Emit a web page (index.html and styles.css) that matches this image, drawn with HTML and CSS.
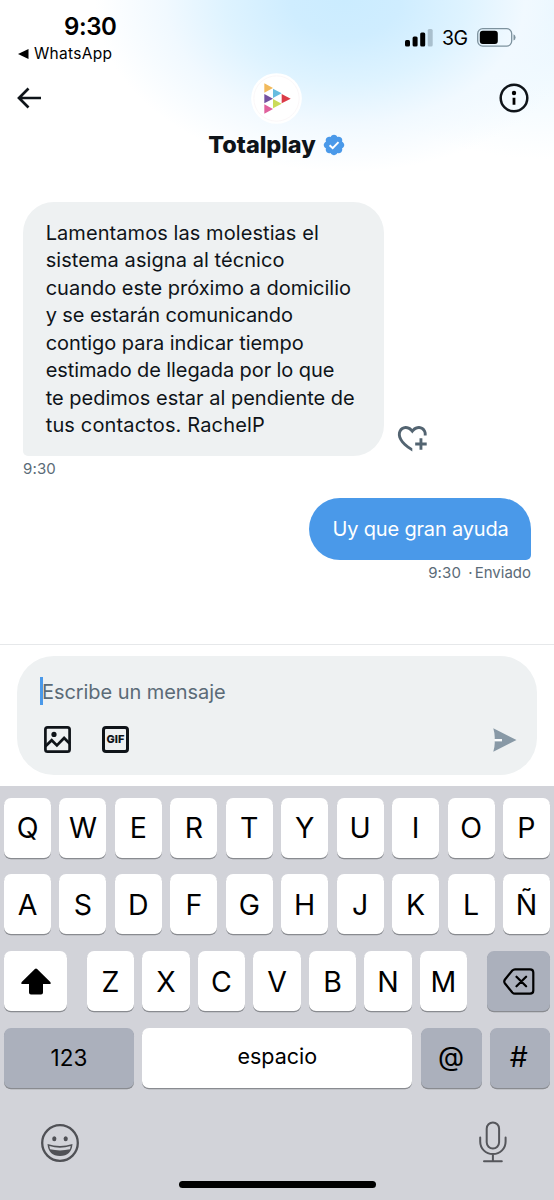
FILE: index.html
```
<!DOCTYPE html>
<html lang="es">
<head>
<meta charset="utf-8">
<title>Totalplay</title>
<link rel="stylesheet" href="styles.css">
</head>
<body>
<div class="screen">
  <header class="header">
    <div class="status">
      <div class="status-left">
        <div class="clock">9:30</div>
        <div class="return-app"><svg class="return-icon" viewBox="0 0 11 10"><path d="M0 5 10.5 0v10z"/></svg><span>WhatsApp</span></div>
      </div>
      <div class="status-right">
        <svg class="signal" viewBox="0 0 28 18"><rect x="0" y="11" width="5" height="6.5" rx="1.5"/><rect x="7.6" y="7.5" width="5" height="10" rx="1.5"/><rect x="15.2" y="3.5" width="5" height="14" rx="1.5"/><rect class="signal-off" x="22.7" y="0" width="5" height="17.5" rx="1.5"/></svg>
        <span class="network">3G</span>
        <svg class="battery" viewBox="0 0 39 19"><rect class="battery-shell" x=".7" y=".7" width="34" height="17.4" rx="5"/><rect x="2.8" y="2.8" width="18" height="13.2" rx="3"/><path class="battery-tip" d="M36.5 6.3Q38.600 7.200 38.600 9.400T36.500 12.500z"/></svg>
      </div>
    </div>
    <div class="nav">
      <svg class="back" viewBox="0 0 26 22"><path d="M24 11H2M11.500 1.500 2 11l9.500 9.500"/></svg>
      <svg class="avatar" viewBox="49 23 153 153">
        <circle cx="125.500" cy="99.500" r="76" fill="#fff"/><circle cx="125.500" cy="99.500" r="68" fill="none" stroke="#f7f3f4" stroke-width="2"/>
        <path fill="#f2ba5c" d="M89 54l26 14-26 14z"/><path fill="#7551a0" d="M89 86l26 14-26 14z"/><path fill="#e0609c" d="M89 117l26 14-26 14z"/>
        <path fill="#67bde0" d="M115 70l26 14-26 14z"/><path fill="#cbdb58" d="M115 101l26 14-26 14z"/><path fill="#da3b47" d="M141 86l27 14-27 14z"/>
      </svg>
      <svg class="info" viewBox="0 0 30 30"><circle class="info-ring" cx="15" cy="15" r="13.300"/><circle cx="15" cy="10" r="2.200"/><path d="M13.600 14.800h2.800v7h-2.800z"/></svg>
    </div>
    <div class="title"><h1 class="name">Totalplay</h1><svg class="verified" viewBox="0 0 24 24"><path fill="#4a99e9" d="M22.250 12c0-1.430-.88-2.670-2.190-3.340.46-1.390.2-2.900-.81-3.910s-2.520-1.270-3.910-.81c-.66-1.310-1.910-2.190-3.340-2.190s-2.670.88-3.330 2.190c-1.400-.46-2.910-.2-3.920.81s-1.260 2.520-.8 3.910c-1.310.67-2.200 1.910-2.200 3.340s.89 2.670 2.200 3.340c-.46 1.390-.21 2.900.8 3.910s2.520 1.260 3.910.81c.67 1.310 1.910 2.190 3.340 2.190s2.680-.88 3.340-2.190c1.390.45 2.900.2 3.910-.81s1.270-2.520.81-3.910c1.310-.67 2.190-1.910 2.190-3.340z"/><path fill="none" stroke="#fff" stroke-width="2" d="M7.600 12.200l3.100 3 5.800-6.100"/></svg></div>
  </header>

  <main class="thread">
    <div class="incoming">
      <p class="bubble bubble-in"><span class="loose">Lamentamos las molestias el</span><br><span class="loose">sistema asigna al técnico</span><br>cuando este próximo a domicilio<br><span class="tight">y se estarán comunicando</span><br><span class="snug">contigo para indicar tiempo</span><br><span class="tight">estimado de llegada por lo que</span><br>te pedimos estar al pendiente de<br><span class="wide">tus contactos. RachelP</span></p>
      <svg class="react" viewBox="0 0 24 24"><path d="M17 12v3h-2.998v2h3v3h2v-3h3v-2h-3.001v-3H17zm-5 6.839c-3.871-2.340-6.053-4.639-7.127-6.609-1.112-2.040-1.031-3.700-.479-4.820.561-1.130 1.667-1.840 2.910-1.910 1.222-.06 2.680.51 3.892 2.160l.806 1.090.805-1.090c1.211-1.650 2.668-2.220 3.890-2.160 1.242.07 2.347.78 2.908 1.910.334.677.49 1.554.321 2.590h2.011c.153-1.283-.039-2.469-.539-3.480-.887-1.790-2.647-2.910-4.601-3.010-1.650-.09-3.367.56-4.796 2.010-1.430-1.450-3.147-2.100-4.798-2.010-1.954.1-3.714 1.220-4.601 3.010-.896 1.810-.846 4.170.514 6.670 1.353 2.480 4.003 5.120 8.382 7.670l.502.299v-2.320z"/></svg>
    </div>
    <div class="meta">9:30</div>
    <p class="bubble bubble-out">Uy que gran ayuda</p>
    <div class="meta meta-out"><span>9:30</span><span class="sent">· Enviado</span></div>
  </main>

  <section class="composer">
    <div class="composer-box">
      <div class="field"><i class="caret"></i><span class="placeholder">Escribe un mensaje</span></div>
      <div class="tools">
        <svg class="tool" viewBox="0 0 27 27"><rect x="1.400" y="1.400" width="24.200" height="24.200" rx="2.200"/><path d="M1.500 20.300l6.200-6.100 5.200 5.200 7.200-7.400 5.500 5.500"/><circle class="dot" cx="10" cy="8.400" r="2.600"/></svg>
        <div class="gif">GIF</div>
        <svg class="send" viewBox="0 0 24 24"><path d="M.3.300 23.500 12 .3 23.700Q2 18 1.700 13.200H9v-2.200H1.700Q2 6 .3.300z"/><path class="send-slot" d="M1.700 11H9v2.200H1.700z"/></svg>
      </div>
    </div>
  </section>

  <section class="keyboard">
    <div class="row"><b class="key">Q</b><b class="key">W</b><b class="key">E</b><b class="key">R</b><b class="key">T</b><b class="key">Y</b><b class="key">U</b><b class="key">I</b><b class="key">O</b><b class="key">P</b></div>
    <div class="row"><b class="key">A</b><b class="key">S</b><b class="key">D</b><b class="key">F</b><b class="key">G</b><b class="key">H</b><b class="key">J</b><b class="key">K</b><b class="key">L</b><b class="key">Ñ</b></div>
    <div class="row row-shift">
      <b class="key"><svg class="shift" viewBox="0 0 30 27"><path d="M13.900.900Q15 0 16.100.900L29.300 14Q30.500 16 28.500 16H22v8.500Q22 26.500 20 26.500H10Q8 26.500 8 24.500V16H1.500Q-.5 16 .7 14z"/></svg></b>
      <div class="letters"><b class="key">Z</b><b class="key">X</b><b class="key">C</b><b class="key">V</b><b class="key">B</b><b class="key">N</b><b class="key">M</b></div>
      <b class="key key-dark"><svg class="delete" viewBox="0 0 32 27"><path d="M12 1.300h15Q30.300 1.300 30.300 4.500v18Q30.300 25.700 27 25.700H12Q10.500 25.700 9.300 24.500L2 15.500Q.5 13.500 2 11.500L9.300 2.500Q10.500 1.300 12 1.300zM13.500 8.700l9.600 9.600M23.100 8.700l-9.600 9.600"/></svg></b>
    </div>
    <div class="row row-space"><b class="key key-dark key-num">123</b><b class="key key-word">espacio</b><b class="key key-dark key-at">@</b><b class="key key-dark key-hash">#</b></div>
    <div class="dock">
      <svg class="emoji" viewBox="0 0 38 38"><circle class="line" cx="19" cy="19" r="17.800"/><ellipse cx="13.300" cy="14.800" rx="2.100" ry="2.500"/><ellipse cx="24.700" cy="14.800" rx="2.100" ry="2.500"/><path d="M6.500 20Q19 24 31.500 20 30.500 32 19 32 7.500 32 6.500 20z"/><path class="teeth" d="M8.300 22Q19 25.300 29.700 22L29 25.300Q19 27.600 9 25.300z"/></svg>
      <svg class="mic" viewBox="0 0 28 42"><rect x="7.700" y="1.500" width="12.400" height="26" rx="6.200"/><path d="M1.200 16.500v4C1.200 27.500 6.500 33 13.900 33s12.700-5.500 12.700-12.500v-4M13.900 33v7.200M5 40.200h17.800"/></svg>
    </div>
    <div class="home"></div>
  </section>
</div>
</body>
</html>
```
FILE: styles.css
```
* { box-sizing: border-box; }
body { margin: 0; background: #fff; font-family: Inter, "Liberation Sans", sans-serif; color: #0f1419; }
svg { display: block; flex: none; overflow: visible; }
.screen { width: 554px; height: 1200px; display: flex; flex-direction: column; overflow: hidden; }

.header { height: 202px; flex: none; background: radial-gradient(ellipse 250px 172px at 345px 0, #cbecff 0, #cfedff 22%, #def3ff 48%, #f1f9ff 72%, rgba(255,255,255,0) 100%), radial-gradient(ellipse 240px 150px at 554px 10px, #e4f5ff, #fff); }
.status { height: 72px; display: flex; justify-content: space-between; padding: 12.500px 38px 0 18px; color: #000; }
.status-left { width: 100px; }
.clock { font-size: 24px; font-weight: 600; line-height: 28px; padding-left: 46px; letter-spacing: -.4px; white-space: nowrap; }
.return-app { display: flex; align-items: center; gap: 5px; font-size: 15.500px; line-height: 20px; margin-top: 3px; letter-spacing: .3px; }
.return-icon { width: 11px; height: 10px; }
.status-right { display: flex; align-items: center; height: 50px; }
.signal { width: 28px; height: 18px; }
.signal-off { fill: #a9bfcd; }
.network { width: 34px; margin-left: 9px; font-size: 19.500px; letter-spacing: -.5px; }
.battery { width: 39px; height: 19px; margin-left: 1px; }
.battery-shell { fill: none; stroke: #7d929e; stroke-width: 1.300; }
.battery-tip { fill: #7d929e; }
.nav { height: 52px; display: flex; align-items: center; justify-content: space-between; padding: 0 25px 0 17px; }
.back { width: 26px; height: 22px; fill: none; stroke: #0f1419; stroke-width: 2.700; }
.avatar { width: 51px; height: 51px; margin-left: 10px; }
.info { width: 30px; height: 30px; }
.info-ring { fill: none; stroke: #0f1419; stroke-width: 2.500; }
.title { height: 41px; display: flex; align-items: center; justify-content: center; gap: 6px; }
.name { margin: 0; font-size: 23.500px; line-height: 40px; font-weight: 800; letter-spacing: -.050px; }
.verified { width: 24px; height: 24px; }

.thread { flex: 1; padding: 0 23px; display: flex; flex-direction: column; }
.incoming { display: flex; align-items: flex-end; gap: 11px; }
.bubble { margin: 0; font-size: 20px; line-height: 27.450px; white-space: nowrap; }
.bubble-in { width: 361px; height: 254px; padding: 18px 22.700px; background: #eef1f2; border-radius: 31px 31px 31px 5px; }
.loose { letter-spacing: .070px; }
.wide { letter-spacing: .150px; }
.snug { letter-spacing: -.040px; }
.tight { letter-spacing: -.090px; }
.react { width: 34.600px; height: 34.600px; fill: #536471; }
.meta { font-size: 15px; line-height: 18px; margin-top: 4px; color: #5b6b77; letter-spacing: .150px; }
.bubble-out { align-self: flex-end; width: 222px; height: 62px; margin-top: 20px; line-height: 62px; padding-left: 23.500px; letter-spacing: -.170px; color: #fff; background: #4a99e9; border-radius: 31px 31px 5px 31px; }
.meta-out { align-self: flex-end; display: flex; gap: 7px; }
.sent { word-spacing: -2px; letter-spacing: 0; }

.composer { height: 142px; flex: none; border-top: 1px solid #e6e8ea; padding: 11px 17px 0; }
.composer-box { height: 119px; border-radius: 37px; background: #eef1f2; padding: 21px 20px 0 23px; }
.field { height: 28px; display: flex; align-items: center; font-size: 20px; color: #5b6b77; }
.caret { width: 3px; height: 28px; background: #4a99e9; }
.placeholder { margin: 1px 0 0 -1px; letter-spacing: -.070px; }
.tools { height: 27px; margin: 21px 0 0 4px; display: flex; align-items: center; gap: 31px; }
.tool { width: 27px; height: 27px; fill: none; stroke: #0f1419; stroke-width: 2.700; }
.dot { fill: #0f1419; stroke: none; }
.gif { width: 27px; height: 27px; border: 3px solid #0f1419; border-radius: 4px; font-size: 11px; font-weight: 800; line-height: 21px; display: flex; justify-content: center; }
.send { width: 24px; height: 24px; margin-left: auto; fill: #8899a6; }
.send-slot { fill: #fafbfc; }

.keyboard { height: 414px; flex: none; background: #d2d3d9; padding: 11.600px 4px 0; color: #000; display: flex; flex-direction: column; }
.row { height: 60px; margin-bottom: 16.800px; display: grid; grid-template-columns: repeat(10, 1fr); gap: 8.400px; flex: none; }
.row-shift { grid-template-columns: 63px 380px 63px; gap: 20px; }
.letters { display: grid; grid-template-columns: repeat(7, 1fr); gap: 8.400px; }
.row-space { grid-template-columns: 130px 270px 61px 60px; gap: 8.300px; margin-bottom: 0; }
.key { display: flex; align-items: center; justify-content: center; background: #fff; border-radius: 7px; box-shadow: 0 1.300px 0 #898b90; font-size: 28.500px; font-weight: 400; }
.key-dark { background: #abb0bc; }
.key-num { font-size: 22.500px; padding-bottom: 1px; }
.key-word { font-size: 21.500px; padding-bottom: 4px; }
.key-at { font-size: 27px; padding-bottom: 2px; }
.key-hash { padding: 0 2px 2px 0; }
.shift { width: 30px; height: 27px; }
.delete { width: 32px; height: 27px; fill: none; stroke: #000; stroke-width: 2.200; stroke-linecap: round; }
.dock { height: 54px; margin-top: 28px; padding: 0 43px 0 37px; display: flex; justify-content: space-between; align-items: center; }
.emoji { width: 38px; height: 38px; fill: #505156; }
.line { fill: none; stroke: #505156; stroke-width: 2.300; }
.teeth { fill: #d2d3d9; }
.mic { width: 28px; height: 42px; margin-top: -2px; fill: none; stroke: #55565b; stroke-width: 2; stroke-linecap: round; }
.home { width: 197px; height: 7px; margin: 11px auto 0; border-radius: 4px; background: #000; }
```
